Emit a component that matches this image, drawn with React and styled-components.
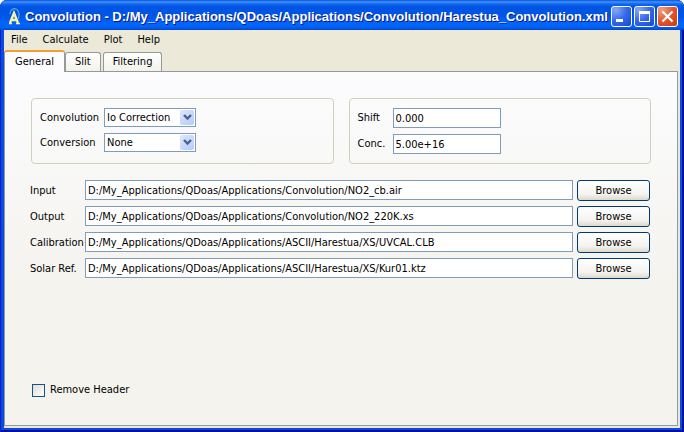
import React from 'react';
import styled, { createGlobalStyle } from 'styled-components';

const GlobalStyle = createGlobalStyle`
  * { box-sizing: border-box; }
  body {
    margin: 0;
    background: #fff;
    color: #000;
    font: 11px/16px "DejaVu Sans Condensed", "Liberation Sans", sans-serif;
  }
  button, input, select { font: inherit; color: inherit; margin: 0; }
`;

const Window = styled.div`
  display: flex;
  flex-direction: column;
  min-height: 100vh;
  padding: 0 4px 4px;
  overflow: hidden;
  border-radius: 7px 7px 0 0;
  background: #0a4be0;
  box-shadow: inset 1px 0 #0a22c8, inset -2px 0 #00109c, inset 0 -2px #00109c;
`;

const TitleBar = styled.header`
  display: flex;
  align-items: center;
  gap: 4px;
  height: 30px;
  margin: 0 -4px;
  padding: 3px 6px 0 7px;
  background: linear-gradient(#0a4fd8 0, #3f95ff 2px, #1467ee 4px, #0054e3 7px, #0055e7 16px, #0264fb 23px, #0262f8 27px, #0046cf 30px);
`;

const Title = styled.h1`
  flex: 1;
  min-width: 0;
  margin: 0;
  white-space: nowrap;
  color: #fff;
  text-shadow: 1px 1px #0a1883;
  font: bold 13px/20px "Liberation Sans", sans-serif;
`;

const WindowButtons = styled.div`
  display: flex;
  gap: 2px;
`;

const WindowButton = styled.button`
  display: grid;
  place-items: center;
  width: 21px;
  height: 21px;
  padding: 0;
  border: 1px solid #fff;
  border-radius: 3px;
  background: ${({ $close }) =>
    $close
      ? 'radial-gradient(circle at 20% 15%, #f0a084, #e2552e 50%, #c63c13)'
      : 'radial-gradient(circle at 20% 15%, #86a8f8, #3468ea 50%, #1648cb)'};
`;

const MenuBar = styled.nav`
  display: flex;
  gap: 15px;
  height: 20px;
  padding: 2px 7px;
  background: #ece9d8;
`;

const MenuButton = styled.button`
  padding: 0;
  border: 0;
  background: none;
`;

const Client = styled.main`
  flex: 1;
  display: flex;
  flex-direction: column;
  padding: 0 2px 2px 0;
  background: #ece9d8;
`;

const Tabs = styled.div`
  display: flex;
  align-items: flex-end;
  height: 21px;
`;

const Tab = styled.button`
  position: relative;
  height: ${({ $active }) => ($active ? 22 : 19)}px;
  margin: 0 ${({ $active }) => ($active ? 0 : 2)}px ${({ $active }) => ($active ? -1 : 0)}px 0;
  padding: 0 ${({ $active }) => ($active ? 10 : 9)}px;
  border: 1px solid #919b9c;
  border-bottom: 0;
  border-top: ${({ $active }) => ($active ? '2px solid #f0a030' : '1px solid #919b9c')};
  border-radius: 3px 3px 0 0;
  background: ${({ $active }) => ($active ? '#fcfcfe' : 'linear-gradient(#fff, #f2f1ea)')};
`;

const Panel = styled.section`
  flex: 1;
  display: flex;
  flex-direction: column;
  padding: 26px 26px 27px;
  border: 1px solid #919b9c;
  background: linear-gradient(#fcfcfe, #f4f3ee 60%);
`;

const Groups = styled.div`
  display: grid;
  grid-template-columns: 1fr 1fr;
  gap: 15px;
`;

const Group = styled.div`
  display: grid;
  grid-template-columns: ${({ $label }) => $label}px ${({ $field }) => $field}px;
  align-content: start;
  row-gap: 6px;
  align-items: center;
  height: 66px;
  padding: 9px 8px;
  border: 1px solid #d0d0bf;
  border-radius: 4px;
`;

const Label = styled.label`
  white-space: nowrap;
`;

const TextInput = styled.input`
  width: 100%;
  min-width: 0;
  height: 20px;
  padding: 0 2px;
  border: 1px solid #7f9db9;
  border-radius: 0;
  outline: 0;
  background: #fff;
`;

const SelectBox = styled.div`
  position: relative;
  height: 19px;
`;

const Select = styled.select`
  display: block;
  width: 100%;
  height: 19px;
  padding: 0 17px 0 2px;
  border: 1px solid #7f9db9;
  border-radius: 0;
  appearance: none;
  background: #fff;
`;

const Arrow = styled.span`
  position: absolute;
  top: 2px;
  right: 2px;
  display: grid;
  place-items: center;
  width: 14px;
  height: 15px;
  border-radius: 2px;
  background: linear-gradient(135deg, #dce6ff, #b5cbfb);
  pointer-events: none;
`;

const Files = styled.div`
  display: grid;
  grid-template-columns: 55px 1fr 73px;
  row-gap: 5px;
  align-items: start;
  margin: 16px 1px 0 -1px;
`;

const FileLabel = styled(Label)`
  line-height: 21px;
`;

const PathInput = styled(TextInput)`
  width: calc(100% - 4px);
`;

const Browse = styled.button`
  height: 21px;
  padding: 0;
  border: 1px solid #003c74;
  border-radius: 3px;
  background: linear-gradient(#fff, #f4f3ee 70%, #dcd8cc);
`;

const CheckLabel = styled.label`
  display: flex;
  align-items: center;
  align-self: flex-start;
  gap: 5px;
  margin-top: auto;
  padding-left: 1px;
`;

const CheckBox = styled.input`
  appearance: none;
  width: 13px;
  height: 13px;
  border: 1px solid #1c5180;
  background: linear-gradient(135deg, #dcdcd7, #fff);
  &:checked { background: #21a121; }
`;

const Logo = () => (
  <svg width="14" height="18" viewBox="0 0 14 18" fill="none" aria-hidden="true">
    <path d="M3 6C3 2 6 0 9 1s4 6 2 10" stroke="#5ba5e8" strokeWidth="1.2" />
    <path d="M3 15 7 5l4 10M4 12h6" stroke="#f4f3a8" strokeWidth="2.4" />
    <path d="M2 15.500h3M9 15.500h4" stroke="#f4f3a8" strokeWidth="1.500" />
  </svg>
);

function Dropdown({ id, options }) {
  return (
    <SelectBox>
      <Select id={id}>
        {options.map((o) => <option key={o}>{o}</option>)}
      </Select>
      <Arrow>
        <svg width="9" height="7" viewBox="0 0 9 7" fill="none">
          <path d="m1 1 3.5 3.5L8 1" stroke="#4d6185" strokeWidth="2.4" />
        </svg>
      </Arrow>
    </SelectBox>
  );
}

const files = [
  ['Input', 'D:/My_Applications/QDoas/Applications/Convolution/NO2_cb.air'],
  ['Output', 'D:/My_Applications/QDoas/Applications/Convolution/NO2_220K.xs'],
  ['Calibration', 'D:/My_Applications/QDoas/Applications/ASCII/Harestua/XS/UVCAL.CLB'],
  ['Solar Ref.', 'D:/My_Applications/QDoas/Applications/ASCII/Harestua/XS/Kur01.ktz'],
];

export default function App() {
  return (
    <>
      <GlobalStyle />
      <Window>
        <TitleBar>
          <Logo />
          <Title>Convolution - D:/My_Applications/QDoas/Applications/Convolution/Harestua_Convolution.xml</Title>
          <WindowButtons>
            <WindowButton aria-label="Minimize">
              <svg width="17" height="17" viewBox="0 0 17 17"><path d="M3 11h7v3H3z" fill="#fff" /></svg>
            </WindowButton>
            <WindowButton aria-label="Maximize">
              <svg width="17" height="17" viewBox="0 0 17 17" fill="none" stroke="#fff">
                <path d="M3.500 4v9.500h10V4" /><path d="M3 4.500h11" strokeWidth="3" />
              </svg>
            </WindowButton>
            <WindowButton $close aria-label="Close">
              <svg width="17" height="17" viewBox="0 0 17 17" fill="none">
                <path d="m3.500 3.500 10 10m0-10-10 10" stroke="#fff" strokeWidth="2.200" />
              </svg>
            </WindowButton>
          </WindowButtons>
        </TitleBar>
        <MenuBar>
          {['File', 'Calculate', 'Plot', 'Help'].map((m) => <MenuButton key={m}>{m}</MenuButton>)}
        </MenuBar>
        <Client>
          <Tabs role="tablist">
            <Tab role="tab" aria-selected="true" $active>General</Tab>
            <Tab role="tab" aria-selected="false">Slit</Tab>
            <Tab role="tab" aria-selected="false">Filtering</Tab>
          </Tabs>
          <Panel role="tabpanel">
            <Groups>
              <Group $label={64} $field={92}>
                <Label htmlFor="convolution">Convolution</Label>
                <Dropdown id="convolution" options={['Io Correction', 'Standard', 'None']} />
                <Label htmlFor="conversion">Conversion</Label>
                <Dropdown id="conversion" options={['None', 'Air to Vacuum', 'Vacuum to Air']} />
              </Group>
              <Group $label={35} $field={108}>
                <Label htmlFor="shift">Shift</Label>
                <TextInput id="shift" defaultValue="0.000" />
                <Label htmlFor="conc">Conc.</Label>
                <TextInput id="conc" defaultValue="5.00e+16" />
              </Group>
            </Groups>
            <Files>
              {files.map(([name, path]) => (
                <React.Fragment key={name}>
                  <FileLabel htmlFor={name}>{name}</FileLabel>
                  <PathInput id={name} defaultValue={path} />
                  <Browse aria-label={`Browse ${name}`}>Browse</Browse>
                </React.Fragment>
              ))}
            </Files>
            <CheckLabel>
              <CheckBox type="checkbox" />
              Remove Header
            </CheckLabel>
          </Panel>
        </Client>
      </Window>
    </>
  );
}
